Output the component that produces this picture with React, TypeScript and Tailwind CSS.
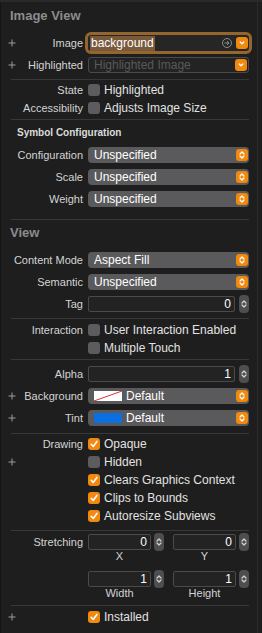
import React from "react";

const UpDown = ({ color = "#ffffff" }: { color?: string }) => (
  <svg width="8" height="10" viewBox="0 0 8 10" fill="none">
    <path d="M2 4 L4 2 L6 4 M2 6 L4 8 L6 6" stroke={color} strokeWidth="1.3" strokeLinecap="round" strokeLinejoin="round" />
  </svg>
);

const Down = () => (
  <svg width="8" height="8" viewBox="0 0 8 8" fill="none">
    <path d="M2.2 3 L4 4.8 L5.8 3" stroke="#ffffff" strokeWidth="1.3" strokeLinecap="round" strokeLinejoin="round" />
  </svg>
);

const Plus = () => (
  <svg width="8" height="8" viewBox="0 0 8 8" fill="none">
    <path d="M4 0.5 V7.5 M0.5 4 H7.5" stroke="#9b9b9b" strokeWidth="1" />
  </svg>
);

const Check = () => (
  <svg width="10" height="10" viewBox="0 0 10 10" fill="none">
    <path d="M2.2 5.3 L4.2 7.4 L7.9 2.4" stroke="#ffffff" strokeWidth="1.6" strokeLinecap="round" strokeLinejoin="round" />
  </svg>
);

const Label = ({ text, plus }: { text?: string; plus?: boolean }) => (
  <div className="w-[82px] shrink-0 flex items-center justify-between pl-[7px] text-[11px] text-[#d4d4d4]">
    <span className="flex items-center">{plus ? <Plus /> : null}</span>
    <span className="whitespace-nowrap">{text}</span>
  </div>
);

const Row = ({
  label,
  plus,
  h = "h-[22px]",
  children,
}: {
  label?: string;
  plus?: boolean;
  h?: string;
  children?: React.ReactNode;
}) => (
  <div className={`flex items-center pr-[8px] ${h}`}>
    <Label text={label} plus={plus} />
    <div className="ml-[5px] flex-1 min-w-0">{children}</div>
  </div>
);

const Separator = () => <div className="mx-[10px] mr-[8px] border-t border-[#383838]" />;

const Popup = ({ value, swatch }: { value: string; swatch?: React.ReactNode }) => (
  <div className="h-[16px] rounded-[4px] bg-[#5a5a5c] flex items-center pl-[6px] pr-[1px] text-[12px] text-white">
    {swatch}
    <span className="flex-1 whitespace-nowrap">{value}</span>
    <span className="w-[12px] h-[12px] rounded-[3px] bg-[#f0890e] flex items-center justify-center">
      <UpDown />
    </span>
  </div>
);

const Stepper = () => (
  <div className="w-[10px] h-[18px] shrink-0 rounded-[4px] bg-[#4e4e50] flex items-center justify-center">
    <UpDown color="#d0d0d0" />
  </div>
);

const NumberField = ({ value }: { value: string }) => (
  <div className="flex items-center gap-[4px]">
    <div className="flex-1 h-[16px] bg-[#232323] border border-[#4a4a4a] rounded-[2px] flex items-center justify-end pr-[3px] text-[12px] text-white">
      {value}
    </div>
    <Stepper />
  </div>
);

const Checkbox = ({ text, checked }: { text: string; checked?: boolean }) => (
  <div className="flex items-center gap-[4px] text-[12px] text-[#e2e2e2]">
    <span
      className={`w-[12px] h-[12px] rounded-[3px] flex items-center justify-center ${
        checked ? "bg-[#f0890e]" : "bg-[#5c5c5e]"
      }`}
    >
      {checked ? <Check /> : null}
    </span>
    <span className="whitespace-nowrap">{text}</span>
  </div>
);

const Header = ({ title, h }: { title: string; h: string }) => (
  <div className={`flex items-center pl-[9px] text-[13px] font-bold text-[#8c8c8c] ${h}`}>{title}</div>
);

const Stretch = ({ value, caption }: { value: string; caption: string }) => (
  <div className="flex flex-col">
    <div className="h-[16px] flex items-center gap-[3px]">
      <div className="flex-1 h-[16px] bg-[#232323] border border-[#4a4a4a] rounded-[2px] flex items-center justify-end pr-[3px] text-[12px] text-white">
        {value}
      </div>
      <Stepper />
    </div>
    <div className="pr-[13px] text-center text-[11px] text-[#d4d4d4] leading-[12px]">{caption}</div>
  </div>
);

export default function App() {
  return (
    <div className="w-[262px] min-h-[633px] bg-[#1e1e1e] border-t-2 border-[#2a2a2a] font-['Liberation_Sans',sans-serif] flex">
      <div className="w-[258px] border-l border-r border-l-[#151515] border-r-[#2c2c2c] flex flex-col">
        <Header title="Image View" h="h-[27px]" />

        <div className="mt-[3px]">
          <Row label="Image" plus>
            <div className="rounded-[6px] border-[3px] border-[#94652d] -mx-[3px] -my-[3px] bg-[#262626] h-[22px] flex items-center pl-[2px] pr-[1px]">
              <span className="text-[12px] text-white bg-[#78593b] px-[1px] leading-[15px]">background</span>
              <span className="flex-1" />
              <span className="w-[10px] h-[10px] rounded-full border border-[#8a8a8a] flex items-center justify-center mr-[4px]">
                <svg width="6" height="6" viewBox="0 0 6 6" fill="none">
                  <path d="M0.5 3 H5 M3 1 L5 3 L3 5" stroke="#9a9a9a" strokeWidth="0.9" />
                </svg>
              </span>
              <span className="w-[12px] h-[12px] rounded-[3px] bg-[#f0890e] flex items-center justify-center">
                <Down />
              </span>
            </div>
          </Row>
          <Row label="Highlighted" plus>
            <div className="h-[16px] rounded-[3px] border border-[#4a4a4a] bg-[#232323] flex items-center pl-[5px] pr-[1px]">
              <span className="flex-1 text-[12px] text-[#595959] whitespace-nowrap">Highlighted Image</span>
              <span className="w-[12px] h-[12px] rounded-[3px] bg-[#f0890e] flex items-center justify-center">
                <Down />
              </span>
            </div>
          </Row>
        </div>

        <div className="mt-[3px]">
          <Separator />
        </div>
        <div className="mt-[1px]">
          <Row label="State" h="h-[18px]">
            <Checkbox text="Highlighted" />
          </Row>
          <Row label="Accessibility" h="h-[18px]">
            <Checkbox text="Adjusts Image Size" />
          </Row>
        </div>
        <div className="mt-[2px]">
          <Separator />
        </div>

        <div className="h-[20px] mt-[2px] flex items-center pl-[16px] text-[10px] font-bold text-[#dcdcdc]">
          Symbol Configuration
        </div>
        <div className="mt-[2px]">
          <Row label="Configuration">
            <Popup value="Unspecified" />
          </Row>
          <Row label="Scale">
            <Popup value="Unspecified" />
          </Row>
          <Row label="Weight">
            <Popup value="Unspecified" />
          </Row>
        </div>
        <div className="mt-[9px]">
          <Separator />
        </div>

        <Header title="View" h="h-[26px]" />
        <div className="mt-[3px]">
          <Row label="Content Mode">
            <Popup value="Aspect Fill" />
          </Row>
          <Row label="Semantic">
            <Popup value="Unspecified" />
          </Row>
          <Row label="Tag">
            <NumberField value="0" />
          </Row>
        </div>
        <div className="mt-[3px]">
          <Separator />
        </div>

        <div className="mt-[2px]">
          <Row label="Interaction" h="h-[18px]">
            <Checkbox text="User Interaction Enabled" />
          </Row>
          <Row h="h-[18px]">
            <Checkbox text="Multiple Touch" />
          </Row>
        </div>
        <div className="mt-[2px]">
          <Separator />
        </div>

        <div className="mt-[3px]">
          <Row label="Alpha">
            <NumberField value="1" />
          </Row>
          <Row label="Background" plus>
            <Popup
              value="Default"
              swatch={
                <svg width="28" height="10" viewBox="0 0 28 10" className="mr-[4px]">
                  <rect x="0" y="0" width="28" height="10" fill="#ffffff" />
                  <path d="M0 10 L28 0" stroke="#e0302a" strokeWidth="1" />
                </svg>
              }
            />
          </Row>
          <Row label="Tint" plus>
            <Popup
              value="Default"
              swatch={<span className="w-[28px] h-[10px] bg-[#0a6fe0] mr-[4px]" />}
            />
          </Row>
        </div>
        <div className="mt-[4px]">
          <Separator />
        </div>

        <div className="mt-[1px]">
          <Row label="Drawing" h="h-[18px]">
            <Checkbox text="Opaque" checked />
          </Row>
          <Row plus h="h-[18px]">
            <Checkbox text="Hidden" />
          </Row>
          <Row h="h-[18px]">
            <Checkbox text="Clears Graphics Context" checked />
          </Row>
          <Row h="h-[18px]">
            <Checkbox text="Clips to Bounds" checked />
          </Row>
          <Row h="h-[18px]">
            <Checkbox text="Autoresize Subviews" checked />
          </Row>
        </div>
        <div className="mt-[5px]">
          <Separator />
        </div>

        <div className="mt-[3px] flex pr-[8px]">
          <div className="w-[82px] shrink-0 h-[16px] flex items-center justify-end text-[11px] text-[#d4d4d4]">
            Stretching
          </div>
          <div className="ml-[5px] flex-1 grid grid-cols-2 gap-x-[9px] gap-y-[9px]">
            <Stretch value="0" caption="X" />
            <Stretch value="0" caption="Y" />
            <Stretch value="1" caption="Width" />
            <Stretch value="1" caption="Height" />
          </div>
        </div>
        <div className="mt-[6px]">
          <Separator />
        </div>

        <div className="mt-[2px]">
          <Row plus h="h-[18px]">
            <Checkbox text="Installed" checked />
          </Row>
        </div>
      </div>
    </div>
  );
}
